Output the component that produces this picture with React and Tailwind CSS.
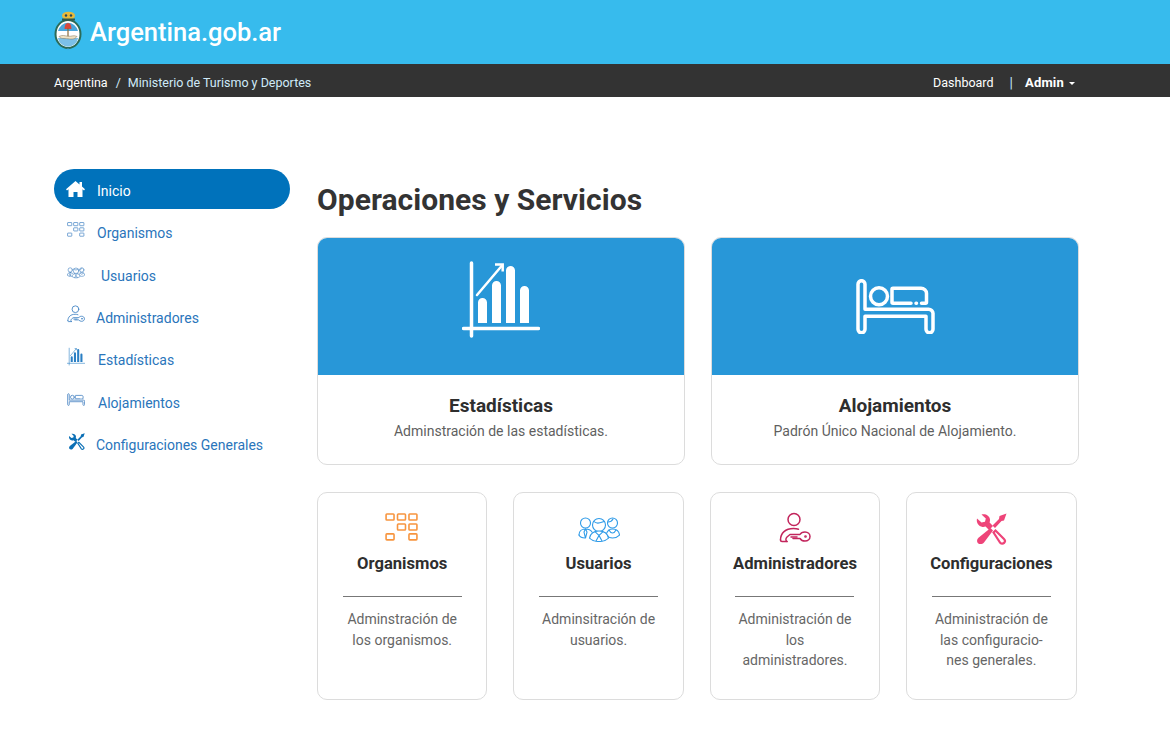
import React from "react";

const font = "font-['Roboto',sans-serif]";

const Escudo = () => (
  <svg width="28" height="40" viewBox="0 0 28 40" fill="none">
    <ellipse cx="14" cy="23" rx="12.500" ry="14" fill="#fff" stroke="#2c6b58" strokeWidth="2" />
    <path d="M4 20a10.500 12 0 0 1 20 0z" fill="#49a6dc" />
    <path d="M3.800 27h20.400a10.500 11.500 0 0 1-20.400 0z" fill="#7cc0e8" />
    <path d="M14 12c2.600 0 3.400 2.800 3.400 6h-6.800c0-3.200.8-6 3.400-6z" fill="#d9483b" />
    <rect x="13.400" y="17" width="1.200" height="9" fill="#8a6a3a" />
    <path d="M5 25.500c3.500-1.800 5-.8 9-.3s5.500-1.500 9 .3c-2 2.800-5 2.800-9 2.300s-7 .5-9-2.300z" fill="#efe2c4" stroke="#7d6f52" strokeWidth=".5" />
    <ellipse cx="14.500" cy="4.700" rx="6.500" ry="4" fill="#e8b93a" />
    <path d="M8 7.500h13v2H8z" fill="#35584a" />
    <circle cx="12" cy="4.500" r="1.200" fill="#27475a" />
    <circle cx="17" cy="4.500" r="1.200" fill="#27475a" />
    <path d="M13 37.500h2l-1 2z" fill="#49a6dc" />
  </svg>
);

const Blocks = ({ size, color, stroke = 1.200 }) => (
  <svg width={size} height={size * 0.82} viewBox="0 0 34 28" fill="none" stroke={color} strokeWidth={stroke}>
    <rect x="1" y="1" width="8" height="6" rx=".8" />
    <rect x="12.500" y="1" width="8" height="6" rx=".8" />
    <rect x="24" y="1" width="8" height="6" rx=".8" />
    <rect x="12.500" y="11" width="8" height="6" rx=".8" />
    <rect x="24" y="11" width="8" height="6" rx=".8" />
    <rect x="1" y="21" width="8" height="6" rx=".8" />
    <rect x="24" y="21" width="8" height="6" rx=".8" />
  </svg>
);

const People = ({ size, color, stroke = 1.100 }) => (
  <svg width={size} height={size * 0.62} viewBox="0 0 42 26" fill="none" stroke={color} strokeWidth={stroke} strokeLinecap="round">
    <circle cx="7.500" cy="7" r="5" />
    <path d="M1 19c0-4 3-6 6.500-6s5.500 1.500 6.500 3M7.500 13l-1.500 3 1.500 6 1.500-6z" />
    <path d="M1 19c1 2 3.500 3 6 3" />
    <circle cx="34.500" cy="7" r="5" />
    <path d="M30 6c2 0 4-1 5-3M28 19c1-4 3-6 6.500-6s6.500 2 7 6c-2 2-4 3-7 3-2 0-4-.5-6-3z" />
    <path d="M31 14c1 2 2 3 3.500 3s2.500-1 3.500-3" />
    <circle cx="21" cy="9" r="6.500" fill="#fff" />
    <path d="M16 5.500c3 3.500 7 1 10 0" />
    <path d="M11.500 22c1-4.500 5-7 9.500-7s8.500 2.500 9.500 7c-2.500 2.500-6 3.500-9.500 3.500s-7-1-9.500-3.500z" fill="#fff" />
    <path d="M17 15.500l4 4 4-4M18 25l3-5.500 3 5.500" />
  </svg>
);

const AdminKey = ({ size, color, stroke = 1.500 }) => (
  <svg width={size} height={size} viewBox="0 0 32 32" fill="none" stroke={color} strokeWidth={stroke} strokeLinecap="round" strokeLinejoin="round">
    <circle cx="15" cy="7.500" r="6" />
    <path d="M1.500 28c0-7 5-11.500 13-11.500 2 0 3.500.2 5 .8" />
    <path d="M1.500 28c0 1 .5 1.500 1.500 1.500h5" />
    <path d="M8 29.500c-1.500-1-1.500-3 0-4.500l3-2.500h10c1-2 3-2.500 5-2.500 3 0 5 2 5 4.500s-2 4.500-5 4.500c-2.500 0-4-1-5-2.500H14" />
    <path d="M12 25h6" />
    <circle cx="26.500" cy="24.500" r=".6" />
  </svg>
);

const Tools = ({ size, color }) => (
  <svg width={size} height={size} viewBox="0 0 32 32" fill={color}>
    <path d="M2 5.500 6.500 9.500l3.500-.8.800-3.200L6.500 1.500C10.500.5 14.500 2.500 15 6.500c.1 1-.1 2-.4 3l3.400 3.400-4 4-3.400-3.400c-1 .3-2 .5-3 .4C3.500 13.500 1 9.500 2 5.500z" />
    <path d="M31.500.5 29 7.500l-2.500.5-6.500 7-2.500-2.500 6.500-6.500.5-3z" />
    <path d="M15.500 15 18 17.500 9 29.500c-1.500 1.800-4.500 2.200-6 .7s-1.200-4 .5-5.500z" />
    <path d="M18.500 19.500 20.500 17.500l8.500 8.500c1.200 1.200 1.200 2.800.1 3.900s-2.700 1.100-3.900-.1z" fill="none" stroke={color} strokeWidth="2.200" />
  </svg>
);

const Chart = ({ size, color, thin }) => (
  <svg width={size} height={size} viewBox="0 0 78 78" fill="none" stroke={color} strokeWidth={thin ? 2.500 : 3.500} strokeLinecap="round">
    <path d="M9.500 3v73M1.500 68.500h75" />
    <path d="M16 63V42.500a4.500 4.500 0 0 1 9 0V63zM30 63V25.500a4.500 4.500 0 0 1 9 0V63zM44 63V10.500a4.500 4.500 0 0 1 9 0V63zM58 63V30.500a4.500 4.500 0 0 1 9 0V63z" fill={color} stroke="none" />
    <path d="M15 35 40 5.500" strokeWidth="2.500" />
    <path d="M33 4.500h7.700v7" strokeWidth="2.500" strokeLinecap="butt" />
  </svg>
);

const Bed = ({ size, color, stroke = 3.500 }) => (
  <svg width={size} height={size * 0.68} viewBox="0 0 80 54" fill="none" stroke={color} strokeWidth={stroke} strokeLinecap="round" strokeLinejoin="round">
    <path d="M3 5a3.500 3.500 0 0 1 7 0v25h63a4.500 4.500 0 0 1 5 5v15a3.500 3.500 0 0 1-7 0V37H10v13a3.500 3.500 0 0 1-7 0z" />
    <circle cx="24" cy="17" r="8.500" />
    <path d="M56 24H38a1 1 0 0 1-1-1V10a1 1 0 0 1 1-1h28c3 0 5.500 2.500 5.500 5v9a1 1 0 0 1-1 1h-4M61 24h.5" />
  </svg>
);

const Home = () => (
  <svg width="19" height="16" viewBox="0 0 19 16" fill="#fff">
    <path d="M9.500 0 0 8.200l1 1.200 1.500-1.200V16h5v-5h4v5h5V8.200L18 9.400l1-1.200-3-2.600V1h-2.500v2.500z" />
  </svg>
);

const navItems = [
  { label: "Organismos", pad: "ml-[12px]", icon: <Blocks size={18} color="#2f76bd" /> },
  { label: "Usuarios", pad: "ml-[16px]", icon: <People size={21} color="#3f7fc0" stroke={1.400} /> },
  { label: "Administradores", pad: "ml-[11px]", icon: <AdminKey size={18} color="#3d80c2" /> },
  { label: "Estadísticas", pad: "ml-[13px]", icon: <Chart size={19} color="#2a7fc4" thin /> },
  { label: "Alojamientos", pad: "ml-[13px]", icon: <Bed size={19} color="#5a90c8" stroke={4} /> },
  { label: "Configuraciones Generales", pad: "ml-[11px]", icon: <Tools size={17} color="#0b6fb5" /> },
];

const smallCards = [
  { title: "Organismos", lift: "pb-[4px]", icon: <Blocks size={34} color="#f7953f" stroke={1.600} />, lines: ["Adminstración de", "los organismos."] },
  { title: "Usuarios", lift: "pb-[3px]", icon: <People size={42} color="#2f9be8" />, lines: ["Adminsitración de", "usuarios."] },
  { title: "Administradores", lift: "pb-[1px]", icon: <AdminKey size={32} color="#c2255c" />, lines: ["Administración de", "los", "administradores."] },
  { title: "Configuraciones", lift: "pb-0", icon: <Tools size={32} color="#ee4479" />, lines: ["Administración de", "las configuracio-", "nes generales."] },
];

const BigCard = ({ icon, title, text, lift }) => (
  <div className="w-[368px] h-[228px] border border-[#dcdcdc] rounded-[10px] overflow-hidden">
    <div className={`h-[137px] bg-[#2897d8] flex items-center justify-center ${lift}`}>{icon}</div>
    <div className="flex flex-col items-center pt-[20px]">
      <h3 className="text-[19px] leading-[22px] font-bold text-[#2e2e2e]">{title}</h3>
      <p className="text-[14px] leading-[20px] mt-[4px] text-[#5f5f5f]">{text}</p>
    </div>
  </div>
);

export default function App() {
  return (
    <div className={`${font} min-h-[744px] bg-white`}>
      <header className="h-[64px] bg-[#37bbed] pl-[54px] flex items-center gap-[8px]">
        <div className="mb-[2px]">
          <Escudo />
        </div>
        <span className="text-[25.500px] font-medium text-white">Argentina.gob.ar</span>
      </header>
      <div className="h-[33px] bg-[#333] pl-[54px] pr-[95px] pt-[5px] flex items-center justify-between text-[12.500px]">
        <div className="flex items-center">
          <span className="text-white">Argentina</span>
          <span className="text-[#cfeaf8] ml-[8px] mr-[7px]">/</span>
          <span className="text-[#cfeaf8]">Ministerio de Turismo y Deportes</span>
        </div>
        <div className="flex items-center text-white">
          <span>Dashboard</span>
          <span className="text-[#bfe6fa] text-[14px] ml-[16px] mr-[12px]">|</span>
          <span className="font-bold text-[13px] tracking-[0.2px] mb-[1px]">Admin</span>
          <span className="ml-[5px] w-0 h-0 border-x-[3px] border-x-transparent border-t-[3px] border-t-white" />
        </div>
      </div>

      <div className="flex pl-[54px] pt-[72px]">
        <nav className="w-[236px] shrink-0">
          <div className="h-[40px] rounded-full bg-[#0072bb] flex items-center pl-[12px] text-white text-[14px]">
            <Home />
            <span className="ml-[12px] mt-[4px]">Inicio</span>
          </div>
          <ul className="pt-[1.500px]">
            {navItems.map((item) => (
              <li key={item.label} className="h-[42.400px] flex items-center pl-[13px] text-[14px] text-[#2a75bb]">
                <span className="w-[18px] flex justify-center mb-[4px]">{item.icon}</span>
                <span className={`${item.pad} mt-[4px]`}>{item.label}</span>
              </li>
            ))}
          </ul>
        </nav>

        <main className="ml-[27px] w-[762px]">
          <h1 className="text-[30px] leading-[36px] font-bold text-[#333] pt-[13px] mb-[19px] tracking-[0.04px]">Operaciones y Servicios</h1>
          <div className="flex gap-[26px]">
            <BigCard lift="pb-[15px]" icon={<Chart size={78} color="#fff" />} title="Estadísticas" text="Adminstración de las estadísticas." />
            <BigCard lift="" icon={<Bed size={80} color="#fff" />} title="Alojamientos" text="Padrón Único Nacional de Alojamiento." />
          </div>
          <div className="flex gap-[26px] mt-[27px]">
            {smallCards.map((card) => (
              <div key={card.title} className="w-[170.400px] h-[208px] border border-[#dcdcdc] rounded-[10px] flex flex-col items-center">
                <div className={`h-[52px] flex items-end ${card.lift}`}>{card.icon}</div>
                <h4 className="text-[16.600px] leading-[20px] font-bold text-[#2e2e2e] mt-[9px]">{card.title}</h4>
                <hr className="w-[119px] border-[#777] mt-[22px] mb-[12px]" />
                <div className="text-[14px] leading-[20.500px] text-[#666] text-center">
                  {card.lines.map((line) => (
                    <div key={line}>{line}</div>
                  ))}
                </div>
              </div>
            ))}
          </div>
        </main>
      </div>
    </div>
  );
}
